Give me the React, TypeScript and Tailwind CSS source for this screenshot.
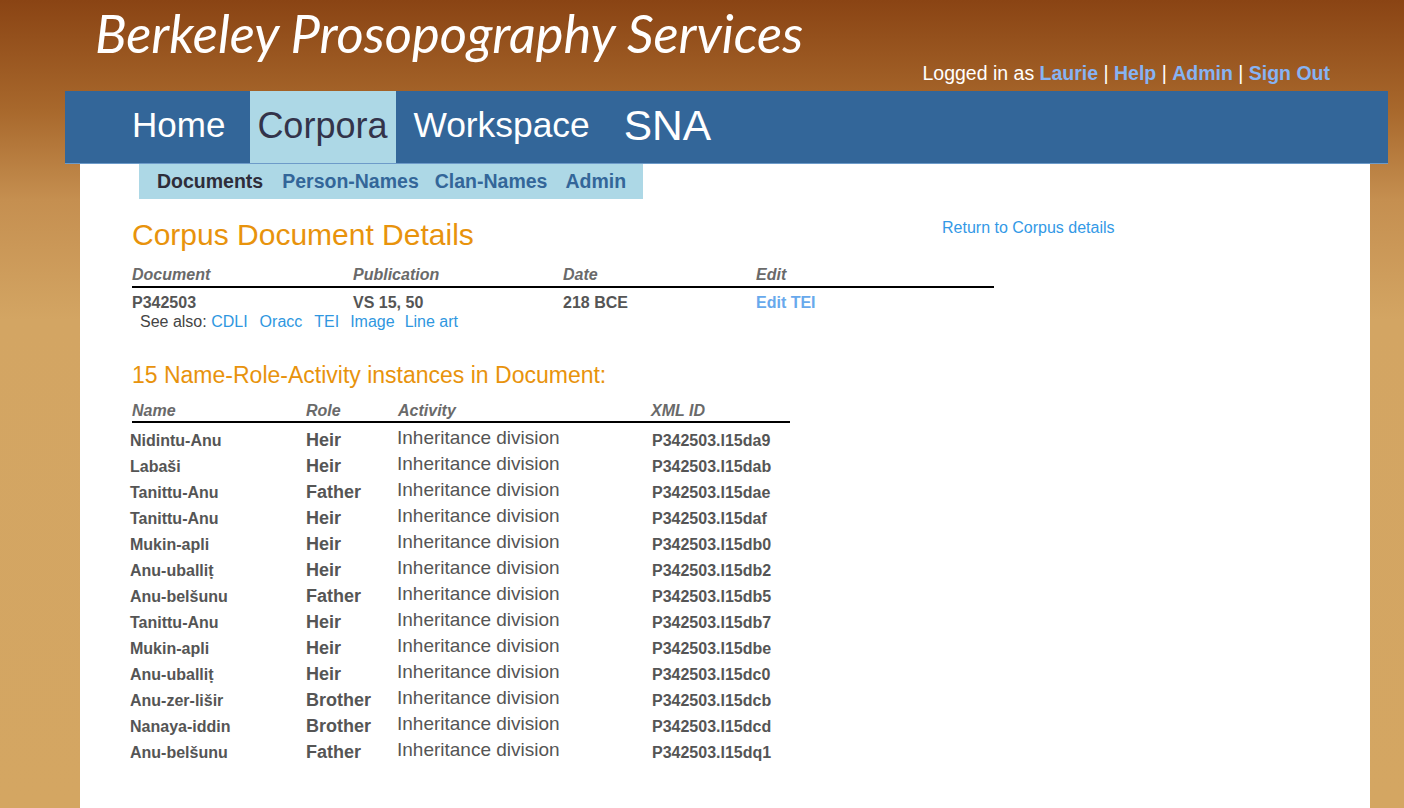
import React from "react";

const rows: [string, string, string][] = [
  ["Nidintu-Anu", "Heir", "P342503.l15da9"],
  ["Labaši", "Heir", "P342503.l15dab"],
  ["Tanittu-Anu", "Father", "P342503.l15dae"],
  ["Tanittu-Anu", "Heir", "P342503.l15daf"],
  ["Mukin-apli", "Heir", "P342503.l15db0"],
  ["Anu-uballiṭ", "Heir", "P342503.l15db2"],
  ["Anu-belšunu", "Father", "P342503.l15db5"],
  ["Tanittu-Anu", "Heir", "P342503.l15db7"],
  ["Mukin-apli", "Heir", "P342503.l15dbe"],
  ["Anu-uballiṭ", "Heir", "P342503.l15dc0"],
  ["Anu-zer-lišir", "Brother", "P342503.l15dcb"],
  ["Nanaya-iddin", "Brother", "P342503.l15dcd"],
  ["Anu-belšunu", "Father", "P342503.l15dq1"],
];

export default function App() {
  return (
    <div
      className="min-h-screen w-full overflow-hidden text-[#555] bg-[linear-gradient(180deg,#8a4414_0px,#a8682c_110px,#c58f50_200px,#d3a563_320px,#d4a662_808px)]"
      style={{ fontFamily: '"Liberation Sans", Arial, sans-serif' }}
    >
      {/* header */}
      <div className="relative h-[91px]">
        <div
          className="absolute left-[95px] top-[0px] text-[52.5px] italic text-white leading-[66px]"
          style={{ fontFamily: 'Lato, "Open Sans", sans-serif' }}
        >
          Berkeley Prosopography Services
        </div>
        <div className="absolute right-[74px] top-[60px] text-[19.5px] leading-[26px] text-white">
          Logged in as <a className="font-bold text-[#86b3f4]">Laurie</a> |{" "}
          <a className="font-bold text-[#86b3f4]">Help</a> |{" "}
          <a className="font-bold text-[#86b3f4]">Admin</a> |{" "}
          <a className="font-bold text-[#86b3f4]">Sign Out</a>
        </div>
      </div>

      {/* main nav */}
      <div className="ml-[65px] w-[1323px] h-[73px] bg-[#336699] border-b border-[#6d9bc9] flex items-stretch text-white">
        <a className="ml-[67px] flex items-center pb-[3px] text-[35px]">Home</a>
        <a className="ml-[25px] w-[146px] bg-[#add8e6] flex items-center pb-[3px] pl-[7px] text-[36px] text-[#33334a]">Corpora</a>
        <a className="ml-[17px] flex items-center pb-[3px] text-[35.4px]">Workspace</a>
        <a className="ml-[34px] flex items-center pb-[3px] text-[42.5px]">SNA</a>
      </div>

      {/* white panel */}
      <div className="ml-[80px] w-[1290px] bg-white min-h-[645px] pb-[40px]">
        <div className="ml-[59px] w-[504px] h-[35px] bg-[#add8e6] flex items-center text-[19.5px] font-bold">
          <a className="ml-[18px] text-[#2d2d3a]">Documents</a>
          <a className="ml-[19px] text-[#336699]">Person-Names</a>
          <a className="ml-[16px] text-[#336699]">Clan-Names</a>
          <a className="ml-[18px] text-[#336699]">Admin</a>
        </div>

        <div className="pl-[52px]">
          <div className="flex items-start mt-[18px]">
            <h1 className="text-[30px] leading-[36px] text-[#e8930c] w-[810px]">Corpus Document Details</h1>
            <a className="text-[16px] text-[#3399e6] leading-[20px] mt-[1px]">Return to Corpus details</a>
          </div>

          {/* document table */}
          <div className="w-[862px] mt-[12px]">
            <div className="grid grid-cols-[221px_210px_193px_238px] text-[16px] font-bold italic text-[#6a6a6a] leading-[20px] border-b-2 border-black pb-[1px]">
              <div>Document</div>
              <div>Publication</div>
              <div>Date</div>
              <div>Edit</div>
            </div>
            <div className="grid grid-cols-[221px_210px_193px_238px] text-[16px] font-bold text-[#555] leading-[20px] mt-[5px]">
              <div>P342503</div>
              <div>VS 15, 50</div>
              <div>218 BCE</div>
              <div><a className="text-[#68a9ec]">Edit TEI</a></div>
            </div>
            <div className="pl-[8px] text-[16px] leading-[18px] text-[#444]">
              See also: <a className="text-[#2f97e0]">CDLI</a>
              <a className="text-[#2f97e0] ml-[12px]">Oracc</a>
              <a className="text-[#2f97e0] ml-[12px]">TEI</a>
              <a className="text-[#2f97e0] ml-[11px]">Image</a>
              <a className="text-[#2f97e0] ml-[10px]">Line art</a>
            </div>
          </div>

          <h2 className="text-[23px] leading-[28px] text-[#e8930c] mt-[30px]">
            15 Name-Role-Activity instances in Document:
          </h2>

          {/* instances table */}
          <div className="w-[658px] mt-[12px]">
            <div className="grid grid-cols-[174px_92px_253px_139px] text-[16px] font-bold italic text-[#6a6a6a] leading-[20px] border-b-2 border-black pb-[0px]">
              <div>Name</div>
              <div>Role</div>
              <div>Activity</div>
              <div>XML ID</div>
            </div>
            <div className="mt-[4px]">
              {rows.map(([name, role, id], i) => (
                <div
                  key={i}
                  className="grid grid-cols-[176px_91px_255px_139px] h-[26px] items-center -ml-[2px] text-[#555]"
                >
                  <div className="text-[16px] font-bold">{name}</div>
                  <div className="text-[18px] font-bold">{role}</div>
                  <div className="text-[19px] -mt-[4px]">Inheritance division</div>
                  <div className="text-[16px] font-bold">{id}</div>
                </div>
              ))}
            </div>
          </div>
        </div>
      </div>
    </div>
  );
}
